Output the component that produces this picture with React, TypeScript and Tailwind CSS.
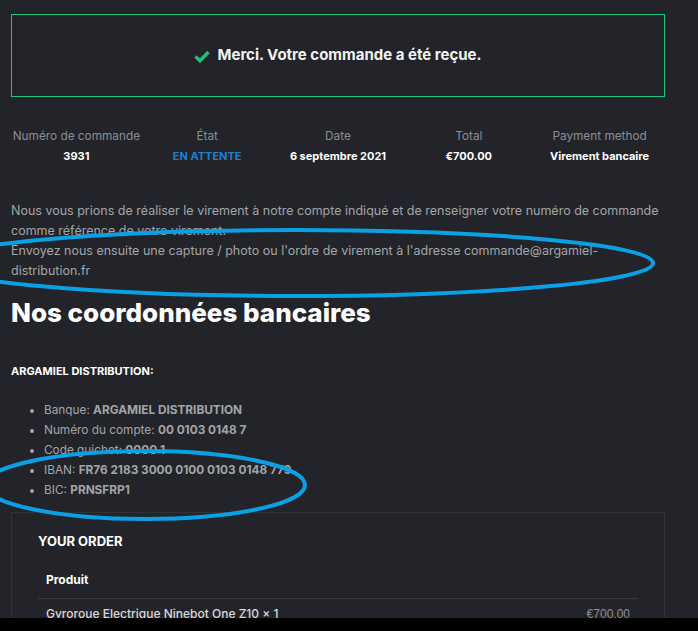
import React from "react";

export default function App() {
  const cols = [
    { label: "Numéro de commande", value: "3931", cls: "text-white" },
    { label: "État", value: "EN ATTENTE", cls: "text-[#1b80d2]" },
    { label: "Date", value: "6 septembre 2021", cls: "text-white" },
    { label: "Total", value: "€700.00", cls: "text-white" },
    { label: "Payment method", value: "Virement bancaire", cls: "text-white" },
  ];
  return (
    <div
      className="relative w-[698px] h-[631px] overflow-hidden bg-[#222429]"
      style={{ fontFamily: "Inter, 'Noto Sans', sans-serif" }}
    >
      <div className="h-[618px] overflow-hidden">
        <div className="w-[654px] ml-[11px] pt-[14px]">
          <div className="h-[83px] border border-[#1fc680] flex items-center justify-center gap-[7px]">
            <svg width="16" height="13" viewBox="0 0 16 13" className="mt-[1px]">
              <path d="M1.5 6.5 L6 10.8 L14.5 2" fill="none" stroke="#1fbf7a" strokeWidth="3.4" />
            </svg>
            <span className="text-[15px] font-bold text-[#f2f2f2]">
              Merci. Votre commande a été reçue.
            </span>
          </div>

          <div className="grid grid-cols-5 mt-[31px] text-center">
            {cols.map((c) => (
              <div key={c.label} className="flex flex-col items-center">
                <div className="text-[11.8px] leading-[16px] text-[#8c8e92]">{c.label}</div>
                <div className={`text-[11px] leading-[16px] mt-[4px] font-bold ${c.cls}`}>
                  {c.value}
                </div>
              </div>
            ))}
          </div>

          <p className="mt-[37px] text-[12.5px] leading-[20px] text-[#a3a4a8]">
            Nous vous prions de réaliser le virement à notre compte indiqué et de renseigner votre numéro de commande comme référence de votre virement.
            <br />
            Envoyez nous ensuite une capture / photo ou l'ordre de virement à l'adresse commande@argamiel-distribution.fr
          </p>

          <h2 className="mt-[15px] text-[26px] leading-[34px] font-extrabold text-white">
            Nos coordonnées bancaires
          </h2>

          <div className="mt-[33px] text-[11px] font-bold text-white">
            ARGAMIEL DISTRIBUTION:
          </div>

          <ul className="mt-[20px] ml-[33px] list-disc text-[11.8px] leading-[20px] text-[#a3a4a8] marker:text-[#a3a4a8]">
            <li>Banque: <b>ARGAMIEL DISTRIBUTION</b></li>
            <li>Numéro du compte: <b>00 0103 0148 7</b></li>
            <li>Code guichet: <b>0000 1</b></li>
            <li>IBAN: <b>FR76 2183 3000 0100 0103 0148 779</b></li>
            <li>BIC: <b>PRNSFRP1</b></li>
          </ul>

          <div className="mt-[12px] border border-[#303237] px-[26px] pt-[19px] h-[200px]">
            <div className="text-[13px] font-bold text-white">YOUR ORDER</div>
            <div className="mt-[20px] px-[8px] text-[12px] font-bold text-white pb-[9px] border-b border-[#3a3c41]">
              Produit
            </div>
            <div className="flex justify-between px-[8px] pt-[6px] text-[12px]">
              <span className="text-[#d8d8da] font-medium">Gyroroue Electrique Ninebot One Z10 × 1</span>
              <span className="text-[#8d8e92]" style={{ fontFamily: "'Liberation Sans', Arial, sans-serif" }}>€700.00</span>
            </div>
          </div>
        </div>
      </div>
      <div className="h-[13px] bg-black" />

      <svg className="absolute left-0 top-0 pointer-events-none" width="698" height="631">
        <ellipse cx="295" cy="263" rx="358" ry="33" fill="none" stroke="#0aa0e6" strokeWidth="4" />
        <ellipse cx="145" cy="485" rx="160" ry="34" fill="none" stroke="#0aa0e6" strokeWidth="4" />
      </svg>
    </div>
  );
}
